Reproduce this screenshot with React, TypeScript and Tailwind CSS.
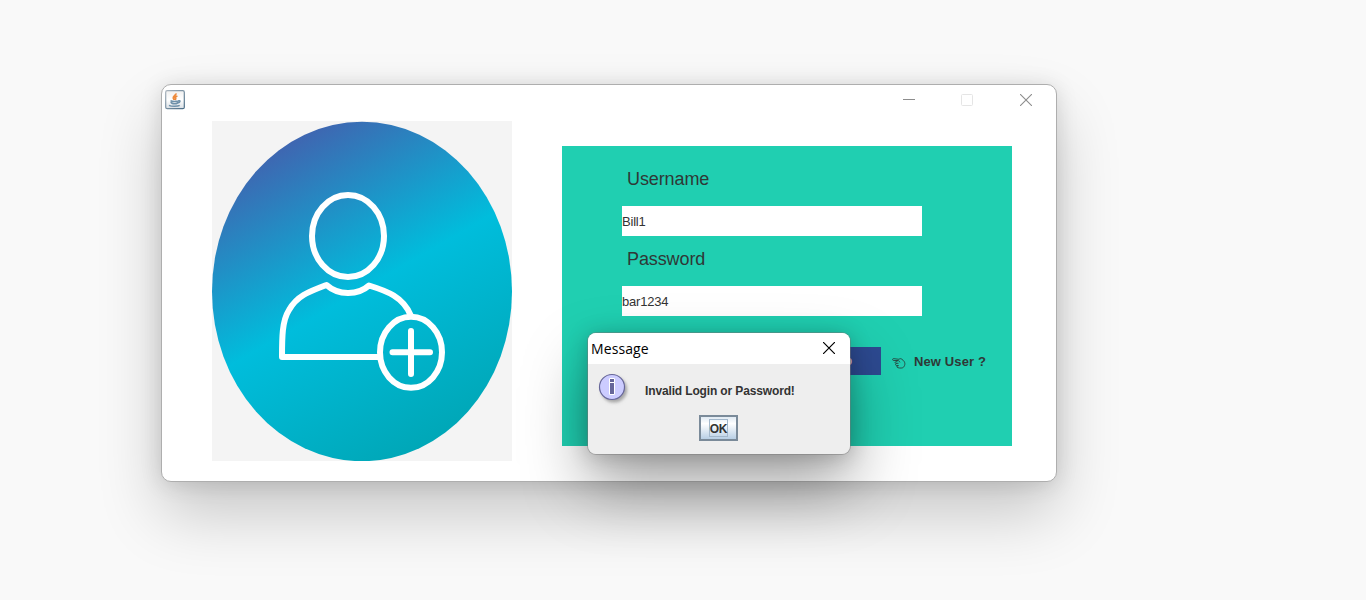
import React from "react";

function JavaIcon() {
  return (
    <svg width="20" height="20" viewBox="0 0 20 20" fill="none">
      <defs>
        <linearGradient id="java-bg" x1="0" y1="0" x2="0" y2="1">
          <stop offset="0" stopColor="#f0f0f0" />
          <stop offset="0.5" stopColor="#ffffff" />
          <stop offset="1" stopColor="#d9dfe4" />
        </linearGradient>
        <linearGradient id="java-edge" x1="0" y1="0" x2="1" y2="1">
          <stop offset="0" stopColor="#a9b3bc" />
          <stop offset="1" stopColor="#496c86" />
        </linearGradient>
      </defs>
      <rect x="0.7" y="0.7" width="18.6" height="18" rx="1.5" fill="url(#java-bg)" stroke="url(#java-edge)" strokeWidth="1.2" />
      <path d="M10.8 3.300c.8 2-3 2.800-2.500 4.800.2.800 1 1.300 1 1.900M12.400 6c-2 .7-2.700 1.400-1.900 2.200.5.6.2 1.100-.3 1.600" stroke="#ee8a3c" strokeWidth="1.800" />
      <path d="M5.500 10.800c1.900.8 6.300.7 8.300 0M6 11.800c.2 1.500 1.300 2 3.800 2 2.200 0 3-.5 3.200-1.900M13.300 10.800c2.400-.7 2.200 1.800-.5 2.100M4 15.300c2.400 1.300 8.800 1.200 10.700 0" stroke="#6f91aa" strokeWidth="1.500" />
    </svg>
  );
}

function AddUserPicture() {
  return (
    <svg className="block bg-[#f4f4f4]" width="300" height="340" viewBox="0 0 300 340" fill="none">
      <defs>
        <linearGradient id="disc" gradientUnits="userSpaceOnUse" x1="31" y1="44" x2="198" y2="334">
          <stop offset="0" stopColor="#4064b0" />
          <stop offset="0.5" stopColor="#00bddc" />
          <stop offset="1" stopColor="#00a7b7" />
        </linearGradient>
      </defs>
      <ellipse cx="150" cy="170.5" rx="150" ry="169.7" fill="url(#disc)" />
      <g stroke="#fff" strokeWidth="6" strokeLinejoin="round" strokeLinecap="round">
        <ellipse cx="136" cy="115" rx="36" ry="41" />
        <path d="M198.500 194C191 176 175 170 157 164.500C146 174.500 126 174.500 114.500 164C96 171 85 175 77 189C70 200 70 217 70 236H167" />
        <ellipse cx="199" cy="231.300" rx="31" ry="35.500" />
        <path d="M199 210v43M180.500 231.300h37.500" />
      </g>
    </svg>
  );
}

function HandIcon() {
  return (
    <svg width="14" height="12" viewBox="0 0 14 12" fill="none" stroke="#283c38" strokeWidth="0.85" strokeLinecap="round" strokeLinejoin="round">
      <path d="M5.200 3.500H1.400C.4 3.300.4 1.700 1.400 1.600L7 2.300C8 1.200 9.400 1.500 11 3.200C13.400 5.200 13.400 8 11.500 10.200C10.500 11.200 8.200 11.300 6 10.700C4.600 10.400 4.500 9 5.500 8.800M5.200 3.500C6.600 3.400 7.300 3.800 7.800 5M5 4.300C2.800 4.300 2.500 6 3.900 6.300H6.100M4.300 6.400C3 7 3.400 8.500 4.700 8.600H6.400" />
    </svg>
  );
}

function InfoIcon() {
  return (
    <svg className="overflow-visible" width="30" height="30" viewBox="0 0 30 30">
      <defs>
        <filter id="info-shadow" x="-30%" y="-30%" width="170%" height="170%">
          <feDropShadow dx="2" dy="2.500" stdDeviation="1.500" floodColor="#777" floodOpacity="0.6" />
        </filter>
      </defs>
      <circle cx="14" cy="14" r="12.500" fill="#ccccff" stroke="#666699" strokeWidth="1.200" filter="url(#info-shadow)" />
      <path d="M11.500 5.500h5v4h-5zM11.500 9.500h5v12h-5z" fill="#666699" stroke="#fff" strokeWidth="1" />
    </svg>
  );
}

function TitleBar() {
  return (
    <header className="flex h-9 shrink-0 items-start justify-between pl-[3px] pr-6">
      <div className="pt-[5px]">
        <JavaIcon />
      </div>
      <div className="flex gap-[46px] pt-[9px] text-[#8d8d8d]">
        <svg width="12" height="12" stroke="currentColor">
          <path d="M0 5.500h12" />
        </svg>
        <svg width="12" height="12" fill="none" stroke="#e5e5e5">
          <rect x="0.500" y="0.500" width="11" height="11" rx="1" />
        </svg>
        <svg className="ml-px" width="12" height="12" stroke="currentColor" strokeWidth="1.100">
          <path d="M0 0l12 12M12 0L0 12" />
        </svg>
      </div>
    </header>
  );
}

function Field({ label, value }: { label: string; value: string }) {
  return (
    <label className="flex h-20 flex-col">
      <span className="pl-[5px] pt-[1px] text-[18px] leading-[24px] tracking-[-0.1px] text-[#2f3836]">{label}</span>
      <span className="mt-[15px] flex h-[30px] w-[300px] items-center bg-white pt-px text-[13px] tracking-[-0.2px] text-[#333333]">
        {value}
      </span>
    </label>
  );
}

function MessageDialog() {
  return (
    <section
      role="dialog"
      className="absolute left-[425px] top-[247px] h-[123px] w-[264px] overflow-hidden rounded-[9px] border border-[#77777777] bg-[#eeeeee] bg-clip-padding shadow-[0_32px_64px_rgba(0,0,0,0.35),0_2px_21px_rgba(0,0,0,0.2)]"
    >
      <header className="flex h-[31px] items-start justify-between bg-white pl-[3px] pr-[15px]">
        <h2 className="pt-[6px] font-['Open_Sans',sans-serif] text-[14px] leading-[20px] tracking-[0.1px] text-black">Message</h2>
        <svg className="mt-[9px]" width="12" height="12" stroke="#000" strokeWidth="1.200">
          <path d="M0 0l12 12M12 0L0 12" />
        </svg>
      </header>
      <div className="flex h-[51px] items-start pl-[10px] pt-[9px]">
        <InfoIcon />
        <p className="ml-[17px] mt-[10px] whitespace-nowrap text-[12px] font-bold leading-4 tracking-[-0.14px] text-[#333333]">
          Invalid Login or Password!
        </p>
      </div>
      <div className="flex pl-[111px]">
        <button className="flex h-[26px] w-[39px] items-center justify-center border-2 border-[#7a8a99] bg-linear-to-b from-[#e0eaf3] via-white via-30% to-[#b8cfe5]">
          <span className="flex h-[18px] w-[19px] items-center justify-center border border-[#a3b8cc] pt-px text-[12px] font-bold leading-none tracking-[-0.3px] text-[#333333]">
            OK
          </span>
        </button>
      </div>
    </section>
  );
}

export default function App() {
  return (
    <main className="h-[600px] w-[1366px] overflow-hidden bg-[#f9f9f9] pl-[161px] pt-[84px] font-['Liberation_Sans',sans-serif]">
      <div className="relative flex h-[398px] w-[896px] flex-col rounded-[10px] border border-[#aeaeae] bg-white shadow-[0_32px_64px_rgba(0,0,0,0.2),0_2px_21px_rgba(0,0,0,0.13)]">
        <TitleBar />
        <div className="flex items-start gap-[50px] pl-[50px]">
          <AddUserPicture />
          <form className="mt-[25px] flex h-[300px] w-[450px] flex-col bg-[#20cfb1] pl-[60px] pt-5">
            <Field label="Username" value="Bill1" />
            <Field label="Password" value="bar1234" />
            <div className="mt-[21px] flex h-[28px] items-center pl-[159px]">
              <button type="button" className="flex h-[28px] w-[100px] items-center justify-end bg-[#2d4a91] pr-[29px] text-[12px] font-bold text-[#dcc8d0]">
                Sign Up
              </button>
              <span className="ml-[11px] flex pt-[3px]">
                <HandIcon />
              </span>
              <span className="ml-2 whitespace-nowrap pt-[2px] text-[13px] font-bold leading-5 tracking-[0.12px] text-[#2f3836]">New User ?</span>
            </div>
          </form>
        </div>
        <MessageDialog />
      </div>
    </main>
  );
}
